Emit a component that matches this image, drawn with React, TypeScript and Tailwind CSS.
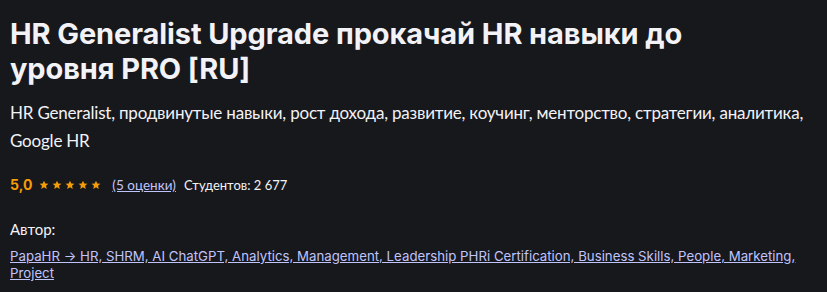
const stars = [0, 1, 2, 3, 4];

function Star() {
  return (
    <svg viewBox="0 0 24 24" className="w-[10px] h-[10px] fill-[#f69c08]">
      <path d="M12 1.5l3.1 7 7.4.6-5.6 4.9 1.7 7.5L12 17.6l-6.6 3.9 1.7-7.5-5.6-4.9 7.4-.6z" />
    </svg>
  );
}

export default function App() {
  return (
    <div className="w-[827px] h-[292px] bg-[#17181c] text-[#f2f2f7] px-[10px] pt-[16px] font-['Inter',sans-serif] overflow-hidden">
      <h1 className="text-[29px] leading-[35px] font-bold tracking-[-0.1px] max-w-[735px]">
        HR Generalist Upgrade прокачай HR навыки до уровня PRO [RU]
      </h1>
      <p className="mt-[13px] text-[17px] leading-[28px] tracking-[-0.2px] font-['Lato',sans-serif]">
        HR Generalist, продвинутые навыки, рост дохода, развитие, коучинг, менторство, стратегии, аналитика, Google HR
      </p>
      <div className="mt-[20px] flex items-center text-[13px] leading-[20px]">
        <span className="font-bold text-[#f69c08] text-[14px] mr-[7px]">5,0</span>
        <div className="flex gap-[3px] mr-[11px]">
          {stars.map((s) => (
            <Star key={s} />
          ))}
        </div>
        <a className="text-[#c0c4fc] underline mr-[8px] font-['Lato',sans-serif] text-[13.5px]">(5 оценки)</a>
        <span className="font-['Lato',sans-serif] text-[13px]">Студентов: 2 677</span>
      </div>
      <div className="mt-[24px] text-[15px] leading-[20px]">
        <div className="font-['Lato',sans-serif]">Автор:</div>
        <div className="mt-[9px] text-[13.25px] leading-[17px]">
          <a className="text-[#c0c4fc] underline">
            PapaHR → HR, SHRM, AI ChatGPT, Analytics, Management, Leadership PHRi Certification, Business Skills, People, Marketing, Project
          </a>
        </div>
      </div>
    </div>
  );
}
